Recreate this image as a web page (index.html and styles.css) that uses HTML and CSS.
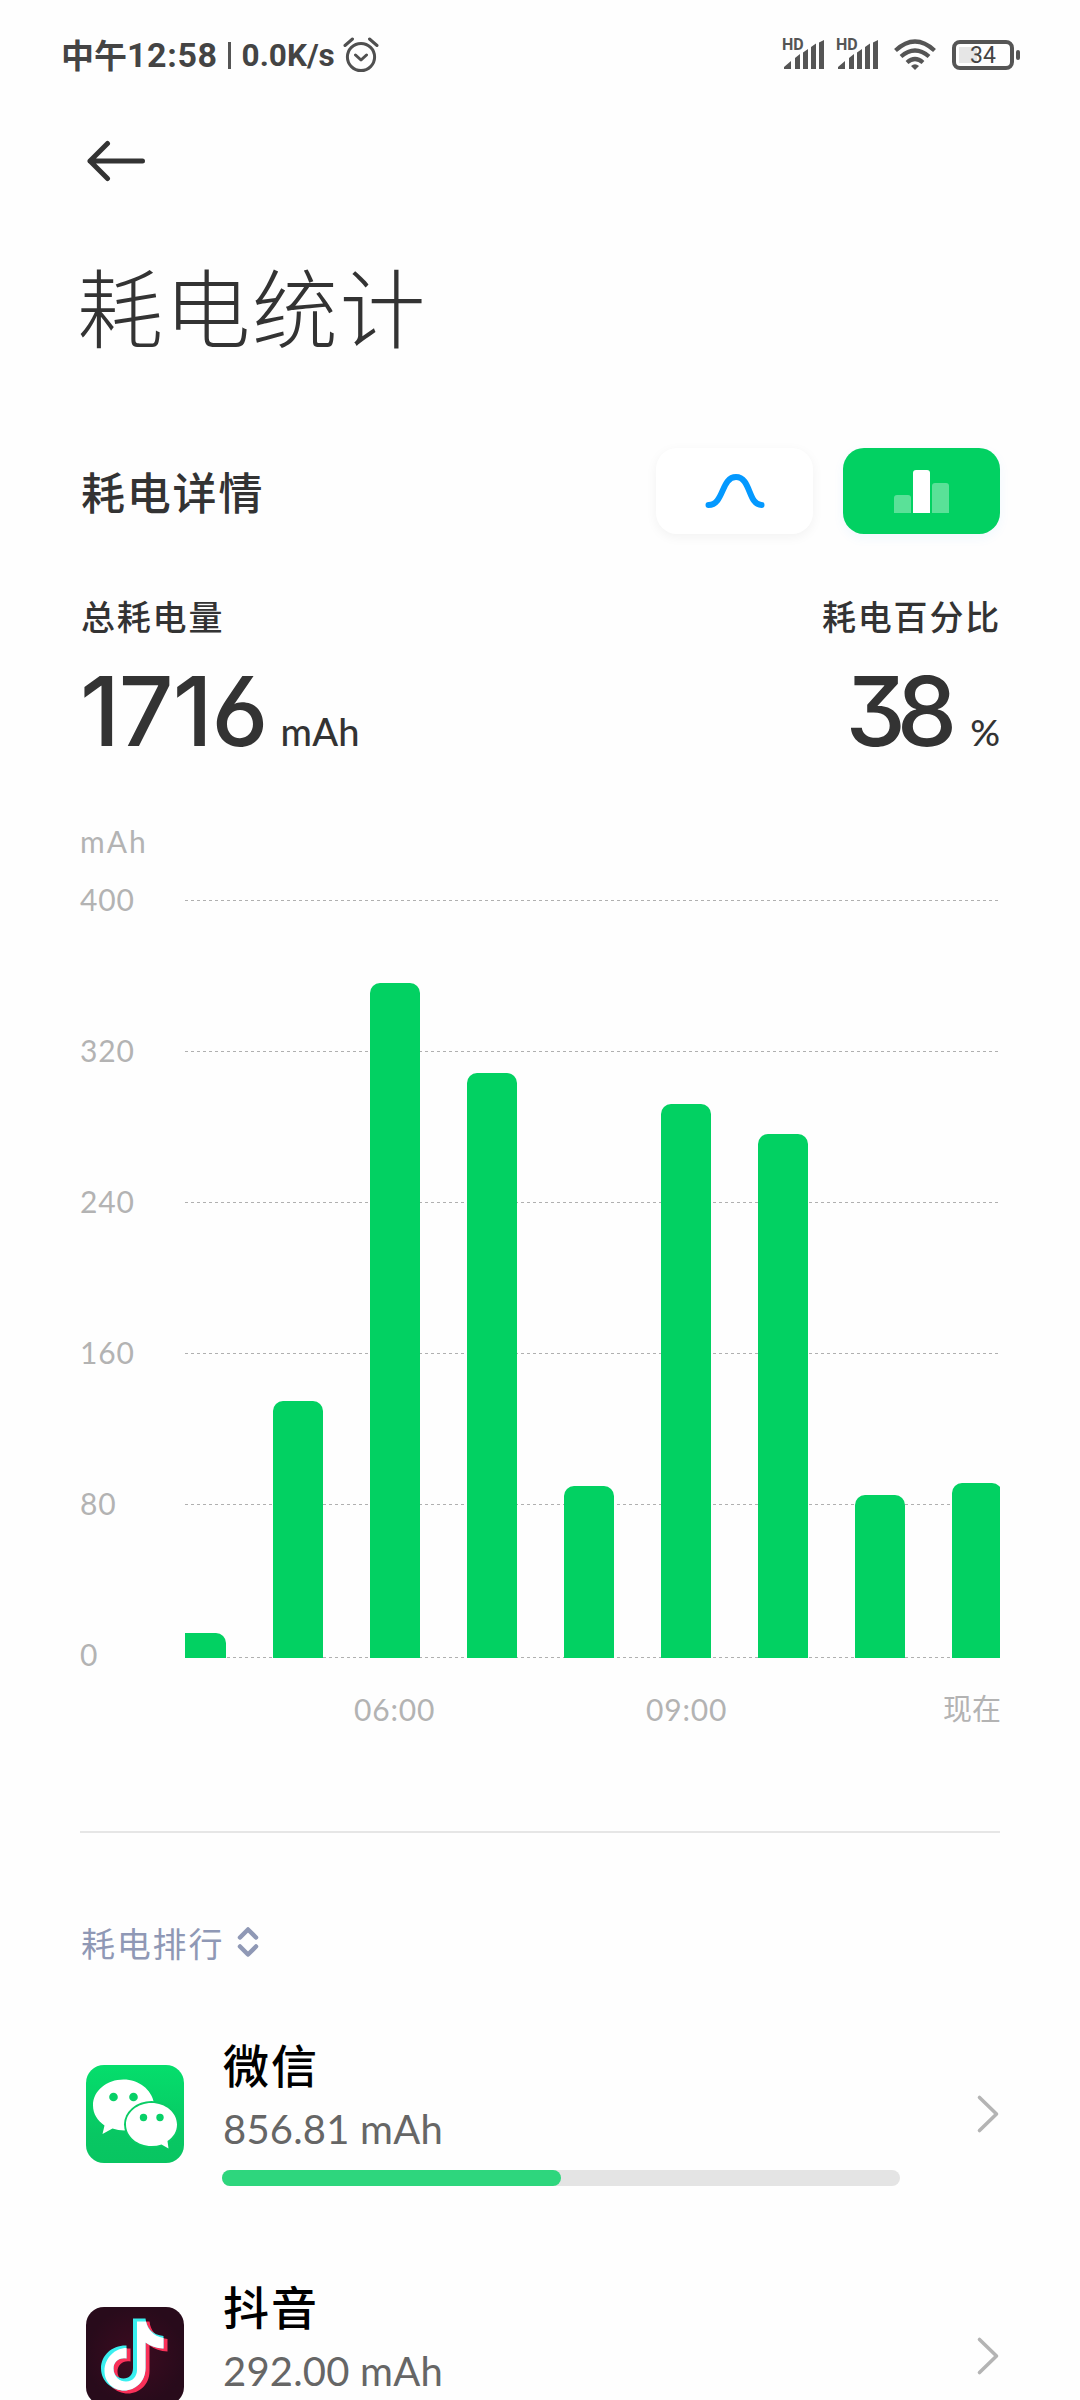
FILE: index.html
```
<!DOCTYPE html>
<html lang="zh-CN">
<head>
    <meta charset="UTF-8">
    <meta name="viewport" content="width=device-width, initial-scale=1.0">
    <title>耗电统计</title>
    <link rel="stylesheet" href="styles.css">
</head>
<body>
    <header class="status-bar">
        <div class="status-left">
            <span class="time-cn">中午</span>
            <span class="time">12:58</span>
            <span class="status-divider"></span>
            <span class="speed">0.0K/s</span>
            <svg class="alarm" width="36" height="36" viewBox="0 0 36 36">
                <circle cx="18" cy="20" r="13.6"/>
                <path d="M2 8.5 9.5 2M34 8.5 26.500 2M12.500 18l5.500 5 5.500-5"/>
            </svg>
        </div>
        <div class="status-right">
            <div class="signal">
                <span class="hd">HD</span>
                <svg width="42" height="32" viewBox="0 0 42 32">
                    <path d="M1 28 8 22V30H1ZM12 19 17 15V30H12ZM20 13.500 25 10V30H20ZM28 8 33 4.500V30H28ZM36 3.500 41 1V30H36Z"/>
                </svg>
            </div>
            <div class="signal">
                <span class="hd">HD</span>
                <svg width="42" height="32" viewBox="0 0 42 32">
                    <path d="M1 28 8 22V30H1ZM12 19 17 15V30H12ZM20 13.500 25 10V30H20ZM28 8 33 4.500V30H28ZM36 3.500 41 1V30H36Z"/>
                </svg>
            </div>
            <svg class="wifi" width="42" height="32" viewBox="0 0 42 32">
                <path d="M1.500 11.500Q21-6.500 40.500 11.500M7 17.500Q21 5.500 35 17.500M13 23.500Q21 16.500 29 23.500"/>
                <path class="wifi-dot" d="M17 27Q21 23.500 25 27L21 31Z"/>
            </svg>
            <div class="battery"><span class="battery-level">34</span></div>
        </div>
    </header>

    <nav class="nav-bar">
        <svg width="60" height="42" viewBox="0 0 60 42">
            <path d="M22.500 3.500 5 21 22.500 38.500M5 21H57.500"/>
        </svg>
    </nav>

    <main class="page">
        <h1 class="page-title">耗电统计</h1>

        <section class="detail-head">
            <h2>耗电详情</h2>
            <div class="tabs">
                <button class="tab">
                    <svg width="60" height="36" viewBox="0 0 60 36">
                        <path class="curve" d="M3.500 32C19 32 16 4 31 4S43 32 56.500 32"/>
                    </svg>
                </button>
                <button class="tab active">
                    <span class="mini-bar low"></span>
                    <span class="mini-bar high"></span>
                    <span class="mini-bar mid"></span>
                </button>
            </div>
        </section>

        <section class="summary">
            <div class="total">
                <p class="summary-label">总耗电量</p>
                <p class="summary-value"><span class="number">1716</span><span class="unit">mAh</span></p>
            </div>
            <div class="percent">
                <p class="summary-label">耗电百分比</p>
                <p class="summary-value"><span class="number">38</span><span class="unit">%</span></p>
            </div>
        </section>

        <section class="chart">
            <p class="chart-unit">mAh</p>
            <div class="chart-body">
                <ul class="y-axis">
                    <li>400</li>
                    <li>320</li>
                    <li>240</li>
                    <li>160</li>
                    <li>80</li>
                    <li>0</li>
                </ul>
                <div class="plot">
                    <svg class="grid" width="815" height="760" viewBox="0 0 815 760">
                        <path d="M0 .5H814M0 151.500H814M0 302.500H814M0 453.500H814M0 604.500H814M0 757.500H814"/>
                    </svg>
                    <div class="bars">
                        <div class="bar" style="height: 25px"></div>
                        <div class="bar" style="height: 257px"></div>
                        <div class="bar" style="height: 675px"></div>
                        <div class="bar" style="height: 585px"></div>
                        <div class="bar" style="height: 172px"></div>
                        <div class="bar" style="height: 554px"></div>
                        <div class="bar" style="height: 524px"></div>
                        <div class="bar" style="height: 163px"></div>
                        <div class="bar" style="height: 175px"></div>
                    </div>
                </div>
            </div>
            <div class="x-axis">
                <span>06:00</span>
                <span>09:00</span>
                <span class="now">现在</span>
            </div>
        </section>

        <section class="ranking">
            <div class="ranking-head">
                <span>耗电排行</span>
                <svg width="24" height="32" viewBox="0 0 24 32">
                    <path d="M4 11.500 12 3.500 20 11.500M4 20.500 12 28.500 20 20.500"/>
                </svg>
            </div>

            <div class="app">
                <svg class="app-icon" width="98" height="98" viewBox="0 0 98 98">
                    <defs>
                        <linearGradient id="wechat-bg" x2="0" y2="1">
                            <stop offset="0" stop-color="#05de6c"/>
                            <stop offset=".7" stop-color="#08c763"/>
                            <stop offset="1" stop-color="#08c561"/>
                        </linearGradient>
                    </defs>
                    <rect width="98" height="98" rx="18" fill="url(#wechat-bg)"/>
                    <path fill="#fff" d="M37.500 14.500C21 14.500 7 25.500 7 40.500 7 49 11.500 55.500 18.500 60.500L16.500 69 26.500 63.500Q32 65.500 38.500 65.500L68 38C65.500 24.500 53 14.500 37.500 14.500Z"/>
                    <ellipse cx="65.500" cy="59.500" rx="27.500" ry="23.500" fill="#09cc65"/>
                    <path fill="#fff" d="M65.500 38C51.500 38 40 47.500 40 59.500S51.500 81 65.500 81Q71 81 75.500 79.500L82.500 83.500 81.500 76C87.500 72 91 66.500 91 59.500 91 47.500 79.500 38 65.500 38Z"/>
                    <g fill="#08d067">
                        <circle cx="27.500" cy="32" r="4.300"/>
                        <circle cx="47.500" cy="32" r="4.300"/>
                        <circle cx="57.500" cy="52.500" r="3.700"/>
                        <circle cx="74" cy="52.500" r="3.700"/>
                    </g>
                </svg>
                <div class="app-info">
                    <h3>微信</h3>
                    <p class="usage">856.81 mAh</p>
                    <div class="progress"><div class="progress-fill" style="width: 339px"></div></div>
                </div>
                <svg class="arrow" width="24" height="40" viewBox="0 0 24 40">
                    <path d="M3.500 3.500 20.500 20 3.500 36.500"/>
                </svg>
            </div>

            <div class="app">
                <svg class="app-icon" width="98" height="98" viewBox="0 0 98 98">
                    <defs>
                        <radialGradient id="douyin-bg">
                            <stop offset="0" stop-color="#3d0b20"/>
                            <stop offset="1" stop-color="#280b1b"/>
                        </radialGradient>
                        <path id="note" d="M47 11.500H59.500C60.500 21 66.500 28 77.500 29V41.500Q67 41 59.500 35.500V61C59.500 75 49 83.500 38 83.500 26 83.500 15 74 15 61.500 15 48 26.500 38 40.500 38.500V51.500C33 50 27.500 55 27.500 61.500S32 71.500 37.500 71.500C43 71.500 47 67.500 47 61Z"/>
                    </defs>
                    <rect width="98" height="98" rx="18" fill="url(#douyin-bg)"/>
                    <use href="#note" x="4" y="3" fill="#f93159"/>
                    <use href="#note" fill="#3aefef"/>
                    <path fill="#fff" d="M51 14.500H60C61.500 22 67 29 77.500 31V41.500Q67 41 59.500 35.500V61C59.500 75 49 83.500 38.500 83.500 27 83.500 18.500 75 18.500 64 18.500 51 29 41 40.500 41V51.500C33 50 27.500 55 27.500 61.500 27.500 70 34 74.500 40 74.500 47 74.500 51 69 51 63Z"/>
                </svg>
                <div class="app-info">
                    <h3>抖音</h3>
                    <p class="usage">292.00 mAh</p>
                    <div class="progress"><div class="progress-fill" style="width: 115px"></div></div>
                </div>
                <svg class="arrow" width="24" height="40" viewBox="0 0 24 40">
                    <path d="M3.500 3.500 20.500 20 3.500 36.500"/>
                </svg>
            </div>
        </section>
    </main>
</body>
</html>
```
FILE: styles.css
```
* {
    margin: 0;
    padding: 0;
    box-sizing: border-box;
}

body {
    width: 1080px;
    height: 2400px;
    overflow: hidden;
    background-color: #fefefe;
    color: #333;
    font-family: Lato, "Noto Sans CJK SC", sans-serif;
}

svg {
    display: block;
    flex: none;
}

ul {
    list-style: none;
}

/* status bar */
.status-bar {
    display: flex;
    justify-content: space-between;
    height: 110px;
    padding: 0 60px 0 61px;
    color: #444;
    font-family: Roboto, "Noto Sans CJK SC", sans-serif;
}

.status-left,
.status-right {
    display: flex;
    align-items: center;
    height: 110px;
}

.time-cn {
    padding-bottom: 2px;
    font-size: 33px;
    font-weight: 600;
}

.time {
    font-size: 34px;
    font-weight: 700;
    letter-spacing: .6px;
}

.status-divider {
    width: 3px;
    height: 27px;
    margin: 0 11px 0 10px;
    background-color: #555;
}

.speed {
    font-size: 31.5px;
    font-weight: 700;
}

.alarm {
    margin-left: 8px;
    fill: none;
    stroke: #505050;
    stroke-width: 3;
    stroke-linecap: round;
    stroke-linejoin: round;
}

.signal {
    position: relative;
    margin-right: 12px;
    fill: #555;
}

.hd {
    position: absolute;
    top: -2px;
    left: -1px;
    color: #555;
    font-size: 16px;
    font-weight: 700;
    line-height: 16px;
}

.wifi {
    margin: 0 16px 0 3px;
    fill: none;
    stroke: #555;
    stroke-width: 4.2;
}

.wifi-dot {
    fill: #555;
    stroke: none;
}

.battery {
    position: relative;
    width: 62px;
    height: 30px;
    margin-right: 6px;
    border: 4px solid #555;
    border-radius: 8px;
    background: linear-gradient(#e6e6e6, #e6e6e6) 3px 3px / 18px 16px no-repeat;
}

.battery::after {
    content: "";
    position: absolute;
    top: 6px;
    right: -10px;
    width: 4px;
    height: 10px;
    border-radius: 2px;
    background-color: #555;
}

.battery-level {
    display: block;
    font-size: 23px;
    font-weight: 400;
    line-height: 24px;
    text-align: center;
}

/* back button */
.nav-bar {
    height: 100px;
    padding: 30px 0 0 85px;
}

.nav-bar path {
    fill: none;
    stroke: #333;
    stroke-width: 5;
    stroke-linecap: round;
    stroke-linejoin: round;
}

.page {
    padding: 0 80px;
}

.page-title {
    height: 238px;
    margin-left: -3px;
    padding-top: 49px;
    font-size: 86px;
    font-weight: 300;
    line-height: 100px;
    letter-spacing: 1.5px;
}

.detail-head {
    display: flex;
    justify-content: space-between;
    align-items: center;
    height: 86px;
}

.detail-head h2 {
    padding: 4px 0 0 1px;
    font-size: 44px;
    font-weight: 500;
    line-height: 60px;
    letter-spacing: 1.8px;
}

.tabs {
    display: flex;
    gap: 30px;
}

.tab {
    display: flex;
    align-items: flex-end;
    justify-content: center;
    gap: 2px;
    width: 157px;
    height: 86px;
    padding-bottom: 21px;
    border: 0;
    border-radius: 21px;
    background-color: #fff;
    box-shadow: 0 3px 12px rgba(0, 0, 0, .05);
}

.tab.active {
    background-color: #02d162;
    box-shadow: 0 4px 12px rgba(0, 150, 255, .06);
}

.tab svg {
    margin-bottom: 4px;
}

.curve {
    fill: none;
    stroke: #0499ff;
    stroke-width: 6;
    stroke-linecap: round;
}

.mini-bar {
    width: 17px;
    border-radius: 3px 3px 0 0;
    background-color: rgba(255, 255, 255, .35);
}

.mini-bar.low { height: 18px; }
.mini-bar.mid { height: 30px; }

.mini-bar.high {
    height: 43px;
    background-color: #fff;
}

/* totals */
.summary {
    display: flex;
    justify-content: space-between;
    height: 276px;
    padding-top: 58px;
}

.summary-label {
    padding-left: 1px;
    font-size: 34px;
    font-weight: 500;
    line-height: 50px;
    letter-spacing: 1.8px;
}

.summary-value {
    display: flex;
    align-items: baseline;
    padding-top: 19px;
    font-family: Inter, sans-serif;
    font-feature-settings: "cv09", "ss01";
    line-height: 100px;
}

.number {
    font-size: 96px;
    font-weight: 500;
    letter-spacing: -1px;
}

.unit {
    margin-left: 13px;
    font-family: Lato, sans-serif;
    font-size: 38px;
    font-weight: 500;
    letter-spacing: .3px;
}

.percent .summary-value {
    justify-content: flex-end;
}

.percent .number {
    letter-spacing: -9px;
}

.percent .unit {
    margin-left: 22px;
    font-size: 37px;
    letter-spacing: 0;
}

.percent .summary-label {
    margin-right: -1px;
}

/* hourly chart */
.chart {
    height: 1023px;
    border-bottom: 2px solid #e6e6e6;
}

.chart-unit,
.y-axis,
.x-axis {
    color: #b3b3b3;
    font-size: 30px;
    line-height: 40px;
    letter-spacing: .8px;
}

.chart-unit {
    height: 69px;
    padding-top: 11px;
    letter-spacing: 2px;
}

.chart-body {
    display: flex;
    height: 779px;
}

.y-axis {
    display: flex;
    flex-direction: column;
    gap: 111px;
    width: 105px;
}

.plot {
    position: relative;
    width: 815px;
    height: 779px;
    padding-top: 21px;
    overflow: hidden;
}

.grid path {
    stroke: #b0b0b0;
    stroke-width: 1;
    stroke-dasharray: 3 3;
}

.bars {
    position: absolute;
    left: -9px;
    bottom: 0;
    display: flex;
    align-items: flex-end;
    gap: 47px;
}

.bar {
    width: 50px;
    border-radius: 10px 10px 0 0;
    background-color: #02d162;
}

.x-axis {
    display: flex;
    padding: 31px 0 0 274px;
}

.x-axis span {
    flex: none;
    width: 292px;
}

.x-axis .now {
    width: auto;
    margin: 0 -4px 0 5px;
    font-size: 29px;
    letter-spacing: 0;
}

/* app ranking */
.ranking-head {
    display: flex;
    align-items: center;
    height: 160px;
    padding: 84px 0 26px 1px;
    color: #8f98b5;
    font-size: 34px;
    letter-spacing: 1.8px;
}

.ranking-head svg {
    margin-left: 12px;
}

.ranking-head path {
    fill: none;
    stroke: #8f98b5;
    stroke-width: 4.5;
    stroke-linecap: round;
    stroke-linejoin: round;
}

.app {
    display: flex;
    height: 242px;
}

.app-icon {
    margin: 72px 38px 0 6px;
}

.app-info {
    width: 678px;
    padding-top: 43px;
}

.app-info h3 {
    padding-left: 1px;
    color: #000;
    font-size: 46px;
    font-weight: 500;
    line-height: 60px;
    letter-spacing: 2px;
}

.usage {
    padding-left: 1px;
    height: 74px;
    color: #666;
    font-size: 40px;
    line-height: 66px;
    letter-spacing: .2px;
}

.progress {
    height: 16px;
    border-radius: 8px;
    background-color: #e4e4e4;
}

.progress-fill {
    height: 16px;
    border-radius: 8px;
    background-color: #2ed67d;
}

.arrow {
    margin: 101px 0 0 76px;
}

.arrow path {
    fill: none;
    stroke: #b4b4b4;
    stroke-width: 3.6;
    stroke-linecap: round;
    stroke-linejoin: round;
}
```
